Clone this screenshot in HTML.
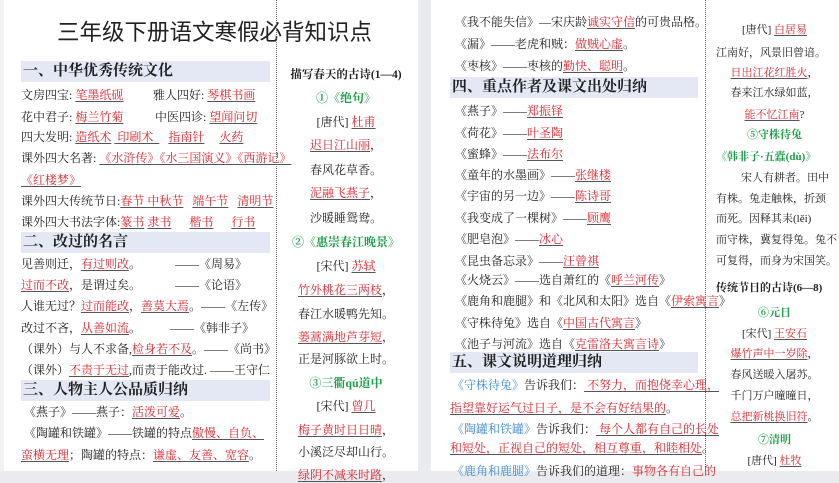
<!DOCTYPE html>
<html><head><meta charset="utf-8"><style>
html,body{margin:0;padding:0;}
body{width:839px;height:471px;position:relative;overflow:hidden;background:#e9ebee;font-family:"Liberation Serif","Noto Serif CJK SC",serif;color:#222;}
.pg{position:absolute;top:0;height:471px;background:#fff;}
.l{position:absolute;white-space:nowrap;font-size:12px;line-height:16px;}
.c{text-align:center;}
.r{color:#e32028;text-decoration:underline;text-decoration-color:#555;text-underline-offset:2px;}
.rn{color:#e32028;}
.g{color:#1a9e45;font-weight:bold;}
.b{color:#3a86d0;}
.h{position:absolute;background:#e3e8f4;height:21px;font-size:15px;font-weight:bold;line-height:21px;white-space:nowrap;padding-left:2px;box-sizing:border-box;}
.dots{position:absolute;top:0;width:0;height:471px;border-left:1px dotted #666;}
.t{font-weight:bold;}
.rc .l{font-size:11px;}
</style></head><body>
<div class="pg" style="left:4px;width:414px;"></div>
<div class="pg" style="left:431px;width:408px;"></div>
<div style="position:absolute;left:0;top:0;width:4px;height:471px;background:#f2f3f5"></div>

<div class="l" style="left:57px;top:18px;font-size:22.5px;line-height:30px;font-family:'Liberation Sans','Noto Sans CJK SC',sans-serif;color:#222;">三年级下册语文寒假必背知识点</div>

<div class="h" style="left:21px;top:61px;width:249px;">一、中华优秀传统文化</div>
<div class="l" style="left:21px;top:87px;">文房四宝: <span class="r">笔墨纸砚</span></div>
<div class="l" style="left:153px;top:87px;">雅人四好: <span class="r">琴棋书画</span></div>
<div class="l" style="left:21px;top:109px;">花中君子: <span class="r">梅兰竹菊</span></div>
<div class="l" style="left:155px;top:109px;">中医四诊: <span class="r">望闻问切</span></div>
<div class="l" style="left:21px;top:129px;">四大发明: <span class="r">造纸术</span> <span class="r">&nbsp;印刷术&nbsp;&nbsp;</span>&nbsp;&nbsp;&nbsp;<span class="r">指南针</span>&nbsp;&nbsp;&nbsp;&nbsp;&nbsp;<span class="r">火药</span></div>
<div class="l" style="left:21px;top:150px;">课外四大名著: <span class="r">《水浒传》《水三国演义》《西游记》</span></div>
<div class="l" style="left:21px;top:172px;"><span class="r">《红楼梦》</span></div>
<div class="l" style="left:21px;top:193px;">课外四大传统节日:<span class="r">春节 中秋节</span>&nbsp;&nbsp;&nbsp;<span class="r">端午节</span>&nbsp;&nbsp;&nbsp;<span class="r">清明节</span></div>
<div class="l" style="left:21px;top:214px;">课外四大书法字体:<span class="r">篆书</span> <span class="r">隶书</span>&nbsp;&nbsp;&nbsp;&nbsp;&nbsp;&nbsp;<span class="r">楷书</span>&nbsp;&nbsp;&nbsp;&nbsp;&nbsp;&nbsp;<span class="r">行书</span></div>

<div class="h" style="left:21px;top:232px;width:249px;">二、改过的名言</div>
<div class="l" style="left:21px;top:256px;">见善则迁，<span class="r">有过则改</span>。</div><div class="l" style="left:175px;top:256px;">——《周易》</div>
<div class="l" style="left:21px;top:277px;"><span class="r">过而不改</span>，是谓过矣。</div><div class="l" style="left:175px;top:277px;">——《论语》</div>
<div class="l" style="left:21px;top:298px;">人谁无过？<span class="r">过而能改</span>，<span class="r">善莫大焉</span>。——《左传》</div>
<div class="l" style="left:21px;top:320px;">改过不吝，<span class="r">从善如流</span>。</div><div class="l" style="left:170px;top:320px;">——《韩非子》</div>
<div class="l" style="left:21px;top:341px;">（课外）与人不求备,<span class="r">检身若不及</span>。——《尚书》</div>
<div class="l" style="left:21px;top:362px;">（课外）<span class="r">不责于无过</span>,而责于能改过. ——王守仁</div>

<div class="h" style="left:21px;top:380px;width:249px;">三、人物主人公品质归纳</div>
<div class="l" style="left:24px;top:404px;">《燕子》——燕子：<span class="r">活泼可爱</span>。</div>
<div class="l" style="left:24px;top:425px;">《陶罐和铁罐》——铁罐的特点<span class="r">傲慢、自负、</span></div>
<div class="l" style="left:21px;top:447px;"><span class="r">蛮横无理</span>；陶罐的特点：<span class="r">谦虚、友善、宽容</span>。</div>

<div class="dots" style="left:276px;"></div>
<div class="l c t" style="left:278px;width:136px;top:67px;font-size:11.5px;">描写春天的古诗(1—4)</div>
<div class="l c g" style="left:278px;width:136px;top:90px;">①《绝句》</div>
<div class="l c" style="left:278px;width:136px;top:114px;">[唐代] <span class="r">杜甫</span></div>
<div class="l c" style="left:278px;width:136px;top:137px;"><span class="r">迟日江山丽</span>，</div>
<div class="l c" style="left:278px;width:136px;top:162px;">春风花草香。</div>
<div class="l c" style="left:278px;width:136px;top:185px;"><span class="r">泥融飞燕子</span>，</div>
<div class="l c" style="left:278px;width:136px;top:210px;">沙暖睡鸳鸯。</div>
<div class="l c g" style="left:278px;width:136px;top:234px;">②《惠崇春江晚景》</div>
<div class="l c" style="left:278px;width:136px;top:258px;">[宋代] <span class="r">苏轼</span></div>
<div class="l c" style="left:278px;width:136px;top:282px;"><span class="r">竹外桃花三两枝</span>，</div>
<div class="l c" style="left:278px;width:136px;top:306px;">春江水暖鸭先知。</div>
<div class="l c" style="left:278px;width:136px;top:329px;"><span class="r">蒌蒿满地芦芽短</span>，</div>
<div class="l c" style="left:278px;width:136px;top:351px;">正是河豚欲上时。</div>
<div class="l c g" style="left:278px;width:136px;top:375px;">③三衢qú道中</div>
<div class="l c" style="left:278px;width:136px;top:398px;">[宋代] <span class="r">曾几</span></div>
<div class="l c" style="left:278px;width:136px;top:422px;"><span class="r">梅子黄时日日晴</span>，</div>
<div class="l c" style="left:278px;width:136px;top:444px;">小溪泛尽却山行。</div>
<div class="l c" style="left:278px;width:136px;top:467px;"><span class="r">绿阴不减来时路</span>，</div>

<div class="l" style="left:455px;top:14px;">《我不能失信》—宋庆龄<span class="r">诚实守信</span>的可贵品格。</div>
<div class="l" style="left:455px;top:36px;">《漏》——老虎和贼：<span class="r">做贼心虚</span>。</div>
<div class="l" style="left:455px;top:58px;">《枣核》——枣核的<span class="r">勤快、聪明</span>。</div>
<div class="h" style="left:450px;top:77px;width:248px;">四、重点作者及课文出处归纳</div>
<div class="l" style="left:455px;top:103px;">《燕子》——<span class="r">郑振铎</span></div>
<div class="l" style="left:455px;top:125px;">《荷花》——<span class="r">叶圣陶</span></div>
<div class="l" style="left:455px;top:146px;">《蜜蜂》——<span class="r">法布尔</span></div>
<div class="l" style="left:455px;top:167px;">《童年的水墨画》——<span class="r">张继楼</span></div>
<div class="l" style="left:455px;top:188px;">《宇宙的另一边》——<span class="r">陈诗哥</span></div>
<div class="l" style="left:455px;top:210px;">《我变成了一棵树》——<span class="r">顾鹰</span></div>
<div class="l" style="left:455px;top:231px;">《肥皂泡》——<span class="r">冰心</span></div>
<div class="l" style="left:455px;top:253px;">《昆虫备忘录》——<span class="r">汪曾祺</span></div>
<div class="l" style="left:455px;top:272px;">《火烧云》——选自萧红的《<span class="r">呼兰河传</span>》</div>
<div class="l" style="left:455px;top:293px;">《鹿角和鹿腿》和《北风和太阳》选自《<span class="r">伊索寓言</span>》</div>
<div class="l" style="left:455px;top:315px;">《守株待兔》选自《<span class="r">中国古代寓言</span>》</div>
<div class="l" style="left:455px;top:336px;">《池子与河流》选自《<span class="r">克雷洛夫寓言诗</span>》</div>
<div class="h" style="left:450px;top:352px;width:248px;">五、课文说明道理归纳</div>
<div class="l" style="left:452px;top:377px;"><span class="b">《守株待兔》</span>告诉我们：<span class="r">&nbsp;不努力，而抱侥幸心理，</span></div>
<div class="l" style="left:450px;top:400px;"><span class="r">指望靠好运气过日子，是不会有好结果的</span>。</div>
<div class="l" style="left:452px;top:421px;"><span class="b">《陶罐和铁罐》</span>告诉我们：<span class="r">&nbsp;每个人都有自己的长处</span></div>
<div class="l" style="left:450px;top:440px;"><span class="r">和短处，正视自己的短处，相互尊重，和睦相处</span>。</div>
<div class="l" style="left:452px;top:463px;"><span class="b">《鹿角和鹿腿》</span>告诉我们的道理：<span class="rn">事物各有自己的</span></div>

<div class="dots" style="left:705px;"></div>
<div class="rc">
<div class="l c" style="left:710px;width:129px;top:22px;">[唐代] <span class="r">白居易</span></div>
<div class="l" style="left:716px;top:45px;">江南好，风景旧曾谙。</div>
<div class="l c" style="left:710px;width:129px;top:65px;"><span class="r">日出江花红胜火</span>，</div>
<div class="l c" style="left:710px;width:129px;top:85px;">春来江水绿如蓝，</div>
<div class="l c" style="left:710px;width:129px;top:107px;"><span class="r">能不忆江南</span>?</div>
<div class="l c g" style="left:710px;width:129px;top:127px;">⑤守株待兔</div>
<div class="l g" style="left:716px;top:149px;">《韩非子·五蠹(dù)》</div>
<div class="l" style="left:741px;top:170px;">宋人有耕者。田中</div>
<div class="l" style="left:716px;top:191px;">有株。兔走触株，折颈</div>
<div class="l" style="left:716px;top:211px;">而死。因释其耒(lěi)</div>
<div class="l" style="left:716px;top:232px;">而守株，冀复得兔。兔不</div>
<div class="l" style="left:716px;top:253px;">可复得，而身为宋国笑。</div>
<div class="l t" style="left:716px;top:280px;">传统节日的古诗(6—8)</div>
<div class="l c g" style="left:710px;width:129px;top:305px;">⑥元日</div>
<div class="l c" style="left:710px;width:129px;top:326px;">[宋代] <span class="r">王安石</span></div>
<div class="l c" style="left:710px;width:129px;top:346px;"><span class="r">爆竹声中一岁除</span>，</div>
<div class="l c" style="left:710px;width:129px;top:367px;">春风送暖入屠苏。</div>
<div class="l c" style="left:710px;width:129px;top:388px;">千门万户曈曈日，</div>
<div class="l c" style="left:710px;width:129px;top:409px;"><span class="r">总把新桃换旧符</span>。</div>
<div class="l c g" style="left:710px;width:129px;top:432px;">⑦清明</div>
<div class="l c" style="left:710px;width:129px;top:453px;">[唐代] <span class="r">杜牧</span></div>
</div>
</body></html>
